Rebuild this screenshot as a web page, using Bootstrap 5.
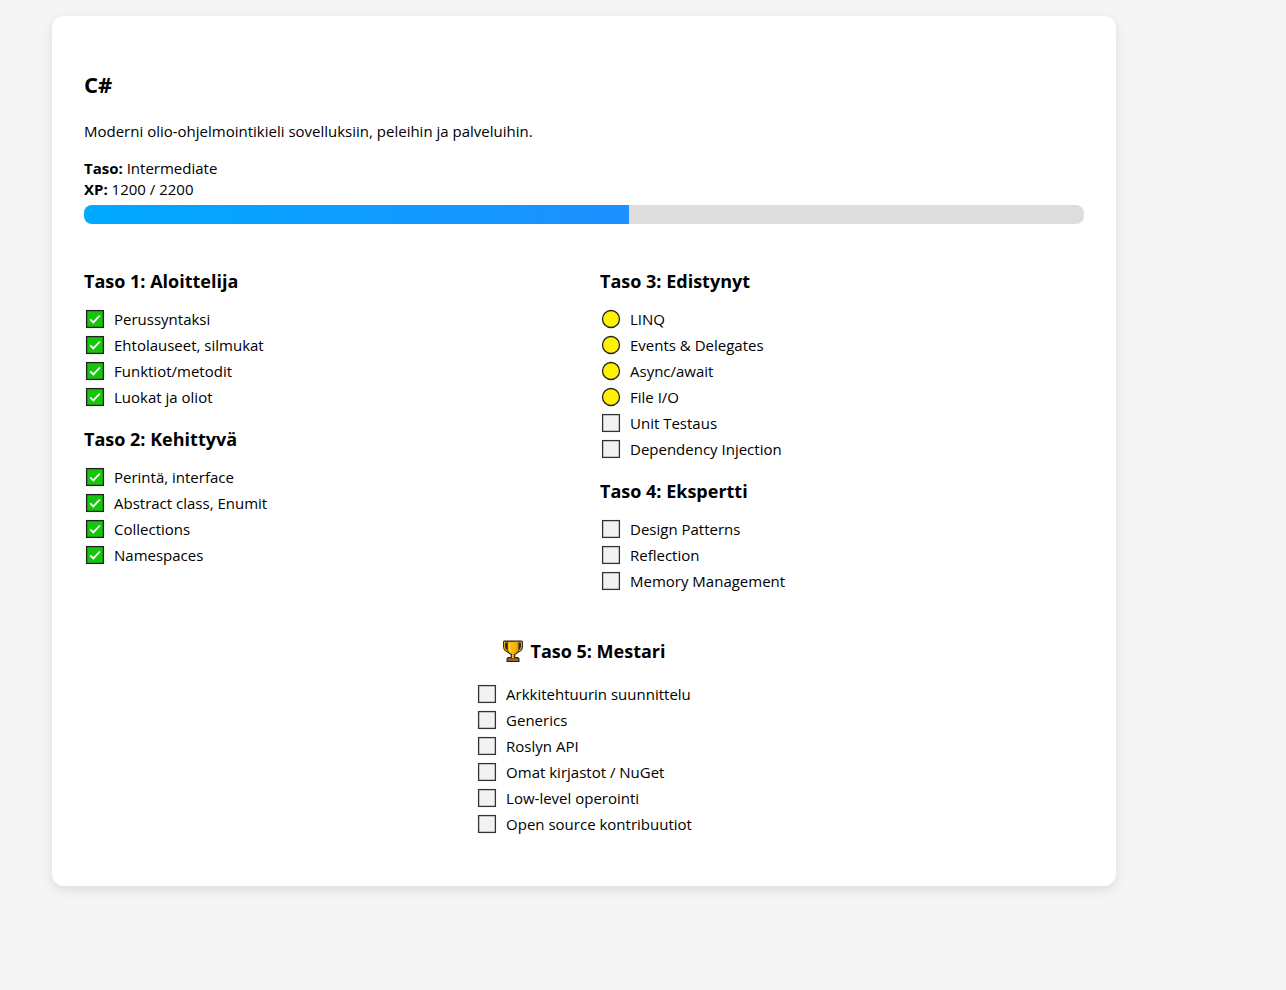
<!DOCTYPE html>
<html lang="fi">
<head>
<meta charset="utf-8">
<meta name="viewport" content="width=device-width, initial-scale=1">
<title>C#</title>
<link href="https://cdn.jsdelivr.net/npm/bootstrap@5.3.0/dist/css/bootstrap.min.css" rel="stylesheet">
<style>
  body { background: #f5f5f5; color: #000; font: 15px/21px "Open Sans", "Noto Sans", sans-serif; }
  .page { padding: 16px 52px 32px; }
  .skill-card { max-width: 1064px; padding: 52px 32px 49px; border-radius: 12px; box-shadow: 0 4px 12px rgba(0, 0, 0, .1); }
  h2 { font-size: 22px; line-height: 32px; font-weight: 700; margin-bottom: 21px; }
  h3 { font-size: 18px; line-height: 24px; font-weight: 700; margin-bottom: 13px; }
  .xp-track { height: 19px; border-radius: 8px; background: #ddd; margin: 5px 0 45px; }
  .xp-track .progress-bar { background: linear-gradient(90deg, #0af, #1e90ff); }
  .levels { --bs-gutter-x: 32px; }
  .skills { line-height: 26px; margin-bottom: 17px; }
  .skills svg { width: 22px; height: 22px; flex: none; }
  .master { margin-top: 28px; }
  .master h3 { gap: 6px; margin-bottom: 18px; }
  .master .skills { margin-bottom: 0; }
  .cup { width: 22px; height: 24px; }
</style>
</head>
<body>
<svg class="d-none" aria-hidden="true">
  <symbol id="done" viewBox="0 0 22 22"><rect x="2.6" y="2.6" width="16.8" height="16.8" fill="#16c60c" stroke="#222" stroke-width="1.3"/><path d="M6.2 11.4l3.1 3 6.6-6.9" fill="none" stroke="#fff" stroke-width="1.8"/></symbol>
  <symbol id="open" viewBox="0 0 22 22"><rect x="2.6" y="2.6" width="16.8" height="16.8" fill="#f2f2f2" stroke="#333" stroke-width="1.3"/></symbol>
  <symbol id="doing" viewBox="0 0 22 22"><circle cx="11" cy="11" r="8.500" fill="#fff100" stroke="#222" stroke-width="1.3"/></symbol>
</svg>
<main class="page">
  <article class="skill-card bg-white">
    <h2>C#</h2>
    <p class="mb-3">Moderni olio-ohjelmointikieli sovelluksiin, peleihin ja palveluihin.</p>
    <div><strong>Taso:</strong> Intermediate</div>
    <div><strong>XP:</strong> 1200 / 2200</div>
    <div class="progress xp-track" role="progressbar" aria-label="XP" aria-valuenow="1200" aria-valuemin="0" aria-valuemax="2200">
      <div class="progress-bar" style="width: 54.5%"></div>
    </div>
    <div class="row levels">
      <section class="col-md-6">
        <h3>Taso 1: Aloittelija</h3>
        <ul class="list-unstyled skills">
          <li class="d-flex align-items-center gap-2"><svg><use href="#done"/></svg>Perussyntaksi</li>
          <li class="d-flex align-items-center gap-2"><svg><use href="#done"/></svg>Ehtolauseet, silmukat</li>
          <li class="d-flex align-items-center gap-2"><svg><use href="#done"/></svg>Funktiot/metodit</li>
          <li class="d-flex align-items-center gap-2"><svg><use href="#done"/></svg>Luokat ja oliot</li>
        </ul>
        <h3>Taso 2: Kehittyvä</h3>
        <ul class="list-unstyled skills">
          <li class="d-flex align-items-center gap-2"><svg><use href="#done"/></svg>Perintä, interface</li>
          <li class="d-flex align-items-center gap-2"><svg><use href="#done"/></svg>Abstract class, Enumit</li>
          <li class="d-flex align-items-center gap-2"><svg><use href="#done"/></svg>Collections</li>
          <li class="d-flex align-items-center gap-2"><svg><use href="#done"/></svg>Namespaces</li>
        </ul>
      </section>
      <section class="col-md-6">
        <h3>Taso 3: Edistynyt</h3>
        <ul class="list-unstyled skills">
          <li class="d-flex align-items-center gap-2"><svg><use href="#doing"/></svg>LINQ</li>
          <li class="d-flex align-items-center gap-2"><svg><use href="#doing"/></svg>Events &amp; Delegates</li>
          <li class="d-flex align-items-center gap-2"><svg><use href="#doing"/></svg>Async/await</li>
          <li class="d-flex align-items-center gap-2"><svg><use href="#doing"/></svg>File I/O</li>
          <li class="d-flex align-items-center gap-2"><svg><use href="#open"/></svg>Unit Testaus</li>
          <li class="d-flex align-items-center gap-2"><svg><use href="#open"/></svg>Dependency Injection</li>
        </ul>
        <h3>Taso 4: Ekspertti</h3>
        <ul class="list-unstyled skills">
          <li class="d-flex align-items-center gap-2"><svg><use href="#open"/></svg>Design Patterns</li>
          <li class="d-flex align-items-center gap-2"><svg><use href="#open"/></svg>Reflection</li>
          <li class="d-flex align-items-center gap-2"><svg><use href="#open"/></svg>Memory Management</li>
        </ul>
      </section>
    </div>
    <section class="master d-flex flex-column align-items-center">
      <h3 class="d-flex align-items-center">
        <svg class="cup" viewBox="0 0 22 24" aria-hidden="true">
          <path d="M2.500 1.500h17q1.500 0 1.500 1.500v4.500c0 3-2 5.500-5 6.200-.8 1-1.700 1.700-2.700 2.100v2.200h2.700l1.500 1.500V23h-13v-3.500L6 18h2.700v-2.200c-1-.4-1.900-1.100-2.700-2.100-3-.7-5-3.200-5-6.200V3q0-1.500 1.500-1.500z" fill="#222"/>
          <path d="M5 3.300H2.500v4.200c0 2.200 1 3.700 3 4.500M17 3.300h2.500v4.200c0 2.200-1 3.700-3 4.500" fill="none" stroke="#f4a90c" stroke-width="1.100"/>
          <path d="M5.700 2.700h10.600v7c0 2.600-1.700 4.600-4.200 5.200v4H9.900v-4c-2.500-.6-4.200-2.600-4.200-5.200z" fill="#fdb900"/>
          <path d="M14.200 2.700h2.100v7c0 2.600-1.700 4.600-4.200 5.200v4h-1.100v-4.600c2-.9 3.200-2.500 3.200-4.600z" fill="#e59b0c"/>
          <path d="M8 4.300v5.200c0 1.300.4 2.200 1.200 3" fill="none" stroke="#ffdc70" stroke-width="1.100"/>
          <path d="M5.600 21.900v-1.500l1-1.200h8.800l1 1.200v1.500z" fill="#a5602a"/>
        </svg>
        Taso 5: Mestari
      </h3>
      <ul class="list-unstyled skills">
        <li class="d-flex align-items-center gap-2"><svg><use href="#open"/></svg>Arkkitehtuurin suunnittelu</li>
        <li class="d-flex align-items-center gap-2"><svg><use href="#open"/></svg>Generics</li>
        <li class="d-flex align-items-center gap-2"><svg><use href="#open"/></svg>Roslyn API</li>
        <li class="d-flex align-items-center gap-2"><svg><use href="#open"/></svg>Omat kirjastot / NuGet</li>
        <li class="d-flex align-items-center gap-2"><svg><use href="#open"/></svg>Low-level operointi</li>
        <li class="d-flex align-items-center gap-2"><svg><use href="#open"/></svg>Open source kontribuutiot</li>
      </ul>
    </section>
  </article>
</main>
<script src="https://cdn.jsdelivr.net/npm/bootstrap@5.3.0/dist/js/bootstrap.bundle.min.js"></script>
</body>
</html>
